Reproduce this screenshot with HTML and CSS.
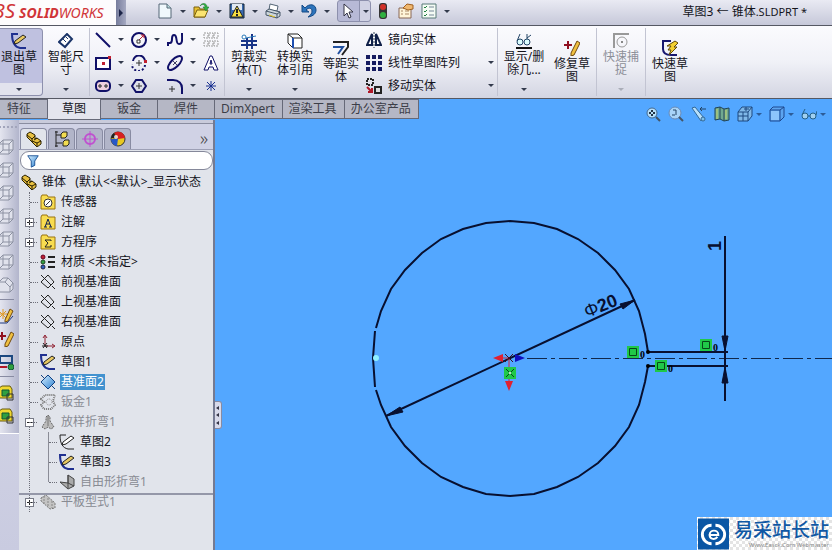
FILE: index.html
```html
<!DOCTYPE html>
<html lang="zh-CN">
<head>
    <meta charset="utf-8">
    <title>草图3 - 锥体.SLDPRT</title>
    <link rel="stylesheet" href="styles.css">
</head>
<body>
<svg class="sprite" aria-hidden="true">
    <defs>
        <linearGradient id="steel" x1="0" y1="0" x2="1" y2="1">
            <stop offset="0" stop-color="#d8f0ff"/>
            <stop offset="1" stop-color="#2a7fd0"/>
        </linearGradient>
    </defs>
    <symbol id="i-part" viewBox="0 0 16 16">
        <path d="M1 3l3-2 5 3v4l2-1 4 3v3l-4 3L1 6z" fill="#e8c040" stroke="#2a2000"/>
        <path d="M1 4l5 4 3-3M6 8v3M11 12l4-2M11 12v3M6 10l5 2 M8 9l3-2" fill="none" stroke="#2a2000"/>
    </symbol>
    <symbol id="i-config" viewBox="0 0 16 16">
        <path d="M2 0v16M2 4h6M2 12h6M1 1h3M1 15h3" fill="none" stroke="#222"/>
        <path d="M7 3l2-2h4v4l-2 2H7zM9 11l2-2h4v4l-2 2H9z" fill="#f2dc50" stroke="#222"/>
    </symbol>
    <symbol id="i-target" viewBox="0 0 16 16">
        <circle cx="8" cy="8" r="5" fill="none" stroke="#c050d0" stroke-width="2"/>
        <path d="M8 0v16M0 8h16" stroke="#c050d0"/>
    </symbol>
    <symbol id="i-ball" viewBox="0 0 16 16">
        <circle cx="8" cy="8" r="7" fill="#e8c820" stroke="#333"/>
        <path d="M8 8L4 2a7 7 0 0 1 11 5z" fill="#d82020"/>
        <path d="M8 8L4 2a7 7 0 0 0-3 5z" fill="#222"/>
        <path d="M8 8L1 8a7 7 0 0 0 6 7z" fill="#2858c8"/>
        <circle cx="6" cy="6" r="2" fill="#fff" opacity=".8"/>
    </symbol>
    <symbol id="i-funnel" viewBox="0 0 16 16">
        <path d="M2 2h12l-4 6v5l-4 2V8z" fill="url(#steel)" stroke="#124a90"/>
    </symbol>
    <symbol id="i-folder" viewBox="0 0 16 16">
        <path d="M1 3l1-2h5l1 2h7v12H1z" fill="#f8dc50" stroke="#9a7410"/>
    </symbol>
    <symbol id="i-sensor" viewBox="0 0 16 16">
        <use href="#i-folder"/>
        <circle cx="8" cy="9" r="4" fill="#fff" stroke="#333"/>
        <path d="M6 11l4-4" stroke="#333"/>
    </symbol>
    <symbol id="i-note" viewBox="0 0 16 16">
        <use href="#i-folder"/>
        <path d="M5 13l3-8 3 8M6 10h4M4 13h3M9 13h3" fill="none" stroke="#102050"/>
    </symbol>
    <symbol id="i-sigma" viewBox="0 0 16 16">
        <use href="#i-folder"/>
        <path d="M11 7V6H5l3 3-3 4h6v-2" fill="none" stroke="#222"/>
    </symbol>
    <symbol id="i-material" viewBox="0 0 16 16">
        <path d="M8 3h7M8 8h7M8 13h7" stroke="#222" stroke-width="2"/>
        <circle cx="3" cy="3" r="2" fill="#c02030" stroke="#602"/>
        <circle cx="3" cy="8" r="2" fill="#30a040" stroke="#242"/>
        <circle cx="3" cy="13" r="2" fill="#3060c0" stroke="#224"/>
    </symbol>
    <symbol id="i-plane" viewBox="0 0 16 16">
        <path d="M8 1l6 7-6 6-7-6zM1 1l3 3M5 5l6 6M12 12l3 3" fill="none" stroke="#222"/>
    </symbol>
    <symbol id="i-plane-on" viewBox="0 0 16 16">
        <path d="M8 1l7 7-7 7-7-7z" fill="url(#steel)" stroke="#104080"/>
        <path d="M1 1l3 3M12 12l3 3" stroke="#104080"/>
    </symbol>
    <symbol id="i-origin" viewBox="0 0 16 16">
        <path d="M5 12V2M5 12h9M3 4l2-3 2 3M12 10l3 2-3 2" fill="none" stroke="#902030"/>
        <path d="M2 12h6M3 9l4 5M7 9l-4 5" stroke="#222"/>
    </symbol>
    <symbol id="i-sketch" viewBox="0 0 16 16">
        <path d="M7 1H1c0 9 3 13 8 14h6" fill="none" stroke="#203090" stroke-width="2"/>
        <path d="M4 8l8-6 3 2-8 6-4 1z" fill="#e8c860" stroke="#222"/>
    </symbol>
    <symbol id="i-sketch-plain" viewBox="0 0 16 16">
        <path d="M7 1H1c0 9 3 13 8 14h6" fill="none" stroke="#222"/>
        <path d="M4 8l8-6 3 2-8 6-4 1z" fill="#fff" stroke="#222"/>
    </symbol>
    <symbol id="i-sheet" viewBox="0 0 16 16">
        <path d="M1 5l4-4h10l-2 6 2 4-4 4H4l-3-4 3-3z" fill="none" stroke="#777" stroke-dasharray="1 1" stroke-width="2"/>
        <circle cx="9" cy="8" r="3" fill="none" stroke="#888" stroke-dasharray="1 1"/>
    </symbol>
    <symbol id="i-loft" viewBox="0 0 16 16">
        <path d="M6 3l2-2 2 2v4l4 6-3 2-3-2-3 2-3-2 4-6z" fill="#bbb" stroke="#666" stroke-dasharray="2 1"/>
        <path d="M8 2v10" stroke="#777"/>
    </symbol>
    <symbol id="i-bend" viewBox="0 0 16 16">
        <path d="M1 8l8 1V1l6 4v7l-6 3z" fill="#aaa" stroke="#444"/>
        <path d="M9 1v8l6 3M9 9v5" fill="none" stroke="#444"/>
    </symbol>
    <symbol id="i-flat" viewBox="0 0 16 16">
        <path d="M1 4l5-3 9 8v5l-5 1-9-8z" fill="#c4c4c4" stroke="#777" stroke-dasharray="2 1"/>
        <path d="M4 2v8M8 4v9M12 7v7" stroke="#888" stroke-dasharray="2 1"/>
    </symbol>
    <symbol id="i-new" viewBox="0 0 16 16">
        <path d="M2 1h8l4 4v10H2z" fill="#f0f8fc" stroke="#567"/>
        <path d="M10 1v4h4" fill="#bdd" stroke="#567"/>
    </symbol>
    <symbol id="i-open" viewBox="0 0 16 16">
        <path d="M1 4h5l1 2h5v8H1z" fill="#e8c030" stroke="#7a6010"/>
        <path d="M1 14l3-7h11l-3 7z" fill="#fbe470" stroke="#7a6010"/>
        <path d="M7 3c3-3 5-1 5 1h-2l3 4 3-4h-2c0-4-5-5-7-1z" fill="#30b040" stroke="#187028" stroke-width=".5"/>
    </symbol>
    <symbol id="i-save" viewBox="0 0 16 16">
        <path d="M1 1h14v14H1z" fill="#3a6ab0" stroke="#123"/>
        <path d="M3 1h10v6H3z" fill="#e0e8f0"/>
        <path d="M8 3l6 11H2z" fill="#f8e040" stroke="#222"/>
        <path d="M8 6v4M8 11v2" stroke="#222" stroke-width="2"/>
    </symbol>
    <symbol id="i-print" viewBox="0 0 16 16">
        <path d="M4 7l1-6 8 2-1 5z" fill="#fff" stroke="#567"/>
        <path d="M1 8l3-2 11 3v4l-3 2-11-3z" fill="#ccd6dc" stroke="#456"/>
        <path d="M1 8l11 3 3-2M12 11v4" fill="none" stroke="#456"/>
        <path d="M4 12l6 2" stroke="#e0c020"/>
    </symbol>
    <symbol id="i-undo" viewBox="0 0 16 16">
        <path d="M1 2v7h7L5 7c3-3 6-2 6 1 0 2-1 4-4 6 6-1 8-4 8-7 0-6-7-7-11-2z" fill="#2d74bc" stroke="#154a86"/>
    </symbol>
    <symbol id="i-cursor" viewBox="0 0 16 16">
        <path d="M4 1v12l3-3 2 5 2-1-2-5h4z" fill="#fff" stroke="#334"/>
    </symbol>
    <symbol id="i-traffic" viewBox="0 0 16 16">
        <rect x="4" y="0" width="8" height="16" rx="3" fill="#343434"/>
        <circle cx="8" cy="4" r="3" fill="#d03028"/>
        <circle cx="8" cy="12" r="3" fill="#30b040"/>
    </symbol>
    <symbol id="i-props" viewBox="0 0 16 16">
        <path d="M1 5h12v10H1z" fill="#fff4d8" stroke="#865"/>
        <path d="M3 8h2M7 8h4M3 11h2M7 11h4" stroke="#a86"/>
        <path d="M5 5l4-4 6 1v4l-5 1z" fill="#f0b870" stroke="#a06020"/>
    </symbol>
    <symbol id="i-options" viewBox="0 0 16 16">
        <path d="M1 1h14v14H1z" fill="#f4fbf4" stroke="#587a78"/>
        <path d="M3 4l1 1 2-2M3 8l1 1 2-2M3 12l1 1 2-2" fill="none" stroke="#208040"/>
        <path d="M8 4h5M8 8h5M8 12h5" stroke="#789"/>
    </symbol>
    <symbol id="i-dimension" viewBox="0 0 16 16">
        <path d="M1 9l8-8 5 5-7 8z" fill="#fff" stroke="#1a3468" stroke-width="2"/>
        <path d="M5 6l3 3M8 4l2 2" stroke="#1a3468"/>
    </symbol>
    <symbol id="i-line" viewBox="0 0 16 16"><path d="M1 1l14 14" stroke="#101068" stroke-width="2"/></symbol>
    <symbol id="i-circle" viewBox="0 0 16 16">
        <circle cx="8" cy="8" r="7" fill="none" stroke="#101068" stroke-width="2"/>
        <path d="M7 9l6-6M10 3h3v3" fill="none" stroke="#c02030"/><path d="M6 8h3v3H6z" fill="#fff" stroke="#333"/>
    </symbol>
    <symbol id="i-spline" viewBox="0 0 16 16"><path d="M1 14v-3h2c4 0 0-8 4-8s1 9 5 9 3-5 3-11" fill="none" stroke="#101068" stroke-width="2"/></symbol>
    <symbol id="i-dots" viewBox="0 0 16 16"><path d="M1 1h4v5H1zM6 1h4v5H6zM11 1h4v5h-4zM1 9h4v5H1zM6 9h4v5H6zM11 9h4v5h-4z" fill="none" stroke="#999" stroke-dasharray="2 1"/></symbol>
    <symbol id="i-rect" viewBox="0 0 16 16"><path d="M1 3h14v11H1z" fill="#fff" stroke="#101068" stroke-width="2"/><path d="M7 7h3v3H7zM13 1h3v3h-3z" fill="#c02030"/></symbol>
    <symbol id="i-arc" viewBox="0 0 16 16">
        <path d="M2 6a6 6 0 0 1 12 1" fill="none" stroke="#101068" stroke-width="2"/>
        <path d="M14 10a6 6 0 0 1-13-1" fill="none" stroke="#101068" stroke-width="2" stroke-dasharray="2 2"/>
        <path d="M8 5v6M5 8h6" stroke="#333"/><path d="M13 5h3v3h-3z" fill="#c02030"/>
    </symbol>
    <symbol id="i-ellipse" viewBox="0 0 16 16">
        <ellipse cx="8" cy="8" rx="9" ry="4" transform="rotate(-45 8 8)" fill="none" stroke="#101068" stroke-width="2"/>
        <path d="M6 6l4 4M10 6l-4 4" stroke="#446"/>
    </symbol>
    <symbol id="i-text" viewBox="0 0 16 16"><path d="M1 15L7 1h2l6 14h-4l-1-3H6l-1 3zM7 9h2L8 5z" fill="#fff" stroke="#101068"/></symbol>
    <symbol id="i-slot" viewBox="0 0 16 16"><rect x="1" y="3" width="14" height="10" rx="4" fill="#f0d0e0" stroke="#101068" stroke-width="2"/><path d="M4 7h2v2H4zM10 7h2v2h-2z" fill="#fff" stroke="#222"/></symbol>
    <symbol id="i-hex" viewBox="0 0 16 16"><path d="M5 2h6l4 6-4 6H5L1 8z" fill="none" stroke="#101068" stroke-width="2"/><path d="M8 5v6M5 8h6" stroke="#333"/></symbol>
    <symbol id="i-fillet" viewBox="0 0 16 16"><path d="M0 2h6c6 0 9 4 9 8v6" fill="none" stroke="#101068" stroke-width="2"/><path d="M5 8v6M2 11h6" stroke="#333"/></symbol>
    <symbol id="i-star" viewBox="0 0 16 16"><path d="M8 3v10M3 8h10M4 4l8 8M12 4l-8 8" stroke="#183090"/></symbol>
    <symbol id="i-trim" viewBox="0 0 16 16">
        <path d="M0 8h16M6 5v11M11 1v15M0 12h16" stroke="#183488" stroke-width="2"/>
        <circle cx="3" cy="4" r="2" fill="#fff" stroke="#2878b8"/><path d="M5 5l10-2" stroke="#2878b8"/>
    </symbol>
    <symbol id="i-convert" viewBox="0 0 16 16">
        <path d="M1 1h10l4 4v10H6L1 10zM1 1l5 4h9M6 5v10" fill="#fff" stroke="#222"/>
        <path d="M6 5v10" stroke="#2050b0" stroke-width="2"/>
    </symbol>
    <symbol id="i-offset" viewBox="0 0 16 16">
        <path d="M0 2h15v5l-6 8" fill="none" stroke="#222" stroke-width="2"/>
        <path d="M0 7h10l-5 7" fill="none" stroke="#2050a0" stroke-width="2"/>
    </symbol>
    <symbol id="i-mirror" viewBox="0 0 16 16">
        <path d="M6 2v11H1zM10 2v11h5z" fill="#fff" stroke="#102048" stroke-width="2"/><path d="M8 0v16" stroke="#345" stroke-dasharray="2 1"/>
    </symbol>
    <symbol id="i-pattern" viewBox="0 0 16 16"><path d="M0 0h4v4H0zM6 0h4v4H6zM12 0h4v4h-4zM0 6h4v4H0zM6 6h4v4H6zM12 6h4v4h-4zM0 12h4v4H0zM6 12h4v4H6zM12 12h4v4h-4z" fill="#151b60"/></symbol>
    <symbol id="i-move" viewBox="0 0 16 16">
        <path d="M1 1h6v6H1z" fill="none" stroke="#222" stroke-width="2" stroke-dasharray="2 1"/>
        <path d="M9 9h6v6H9z" fill="#ddd" stroke="#222" stroke-width="2"/>
        <path d="M1 9l5 5M6 10v4H2" fill="none" stroke="#b01828" stroke-width="2"/>
    </symbol>
    <symbol id="i-relations" viewBox="0 0 16 16">
        <path d="M0 15h16" stroke="#111" stroke-width="2"/>
        <path d="M4 1L1 8M11 1v9M11 5l4-3" fill="none" stroke="#246"/>
        <circle cx="4" cy="9" r="3" fill="#dff" stroke="#246"/><circle cx="11" cy="9" r="3" fill="#dff" stroke="#246"/>
    </symbol>
    <symbol id="i-repair" viewBox="0 0 16 16">
        <path d="M0 5h8M4 1v8" stroke="#901020" stroke-width="2"/>
        <path d="M7 13L13 1l3 2-6 12-3 1z" fill="#f0c040" stroke="#704a10"/>
    </symbol>
    <symbol id="i-snap" viewBox="0 0 16 16"><path d="M0 1h16M1 1v14" stroke="#999" stroke-width="2"/><circle cx="9" cy="9" r="5" fill="none" stroke="#999"/><path d="M8 8h2v2H8z" fill="#888"/></symbol>
    <symbol id="i-rapid" viewBox="0 0 16 16">
        <path d="M9 1H1v8c0 4 3 6 8 6h6" fill="none" stroke="#181870" stroke-width="2"/>
        <path d="M5 6l8-5 3 2-4 4h3l-8 8 2-5H6l3-4z" fill="#f4d030" stroke="#604808"/>
    </symbol>
    <symbol id="i-zoomfit" viewBox="0 0 16 16"><circle cx="7" cy="7" r="5" fill="#b8e0fa" stroke="#446a90"/><path d="M11 11l4 4" stroke="#456" stroke-width="2"/><path d="M7 4v6M4 7h6" stroke="#234" stroke-width="2" stroke-dasharray="2 2"/></symbol>
    <symbol id="i-zoomarea" viewBox="0 0 16 16"><circle cx="7" cy="7" r="6" fill="#a8d4f8" stroke="#6a8cb8"/><path d="M11 11l4 4" stroke="#456" stroke-width="2"/><path d="M5 4h3v5M4 9h3" fill="none" stroke="#246"/></symbol>
    <symbol id="i-prev" viewBox="0 0 16 16"><path d="M1 2l3-1 9 11-3 3z" fill="#b8e0fa" stroke="#346a98"/><path d="M15 3H9M11 1L9 3l2 2" fill="none" stroke="#246"/><circle cx="12" cy="13" r="2" fill="#80c0e8" stroke="#346a98"/></symbol>
    <symbol id="i-section" viewBox="0 0 16 16"><path d="M1 2l5-1 4 2 5-1v12l-5 1-4-2-5 1z" fill="#70a890" stroke="#245"/><path d="M6 1v12M10 3v12" stroke="#245"/><path d="M3 3v10M12 4v9" stroke="#c8d870"/></symbol>
    <symbol id="i-orient" viewBox="0 0 16 16"><path d="M1 6l4-5h10v9l-4 5H1z" fill="#80b8e8" stroke="#1c4880"/><path d="M1 6h10v9M11 6l4-5M6 6v9M1 10h10M7 3h5M9 1v4" fill="none" stroke="#1c4880"/></symbol>
    <symbol id="i-display" viewBox="0 0 16 16"><path d="M1 4l3-3h11v10l-4 4H1z" fill="#5ca4f0" stroke="#1c4890"/><path d="M2 5h8v9H2z" fill="#8cc4fc"/><path d="M1 4h10v11M11 4l4-3" fill="none" stroke="#1c4890"/></symbol>
    <symbol id="i-glasses" viewBox="0 0 16 16"><circle cx="4" cy="10" r="3" fill="#a0d0f0" stroke="#246088"/><circle cx="12" cy="10" r="3" fill="#a0d0f0" stroke="#246088"/><path d="M1 9l3-6M7 10h2M15 9l1-4" fill="none" stroke="#246088"/></symbol>
    <symbol id="i-cube" viewBox="0 0 16 16"><path d="M5 1h10v10l-4 4H1V5z" fill="#e0e2ec" stroke="#8c91a2"/><path d="M1 5h10v10M11 5l4-4M5 1v10h10M5 11l-4 4" fill="none" stroke="#8c91a2"/></symbol>
    <symbol id="i-cube-cut" viewBox="0 0 16 16"><path d="M1 5l4-4h5l5 5v6l-3 3H1z" fill="#e0e2ec" stroke="#8c91a2"/><path d="M1 5h6l5 5v5M7 5l3-4M12 10l3-4" fill="none" stroke="#8c91a2"/></symbol>
    <symbol id="i-add-sketch" viewBox="0 0 16 16"><path d="M1 3l7 7M8 3l-7 7M5 1v10M0 6h10" stroke="#e09820"/><path d="M1 15h8l6-7" fill="none" stroke="#1c3880"/><path d="M7 12l5-11 3 2-5 10-3 1z" fill="#f0c040" stroke="#704a10"/></symbol>
    <symbol id="i-link" viewBox="0 0 16 16"><path d="M2 2h12v7H2z" fill="none" stroke="#1c4880" stroke-width="2"/><path d="M1 13h8" stroke="#b01828" stroke-width="2"/><circle cx="13" cy="13" r="3" fill="#30a040" stroke="#153"/></symbol>
    <symbol id="i-body" viewBox="0 0 16 16"><path d="M1 3l3-2h8l2 3v9H1z" fill="#f0d830" stroke="#665a10"/><path d="M4 5h7v6H4z" fill="#30a040" stroke="#153"/><path d="M9 9h6v6H9z" fill="none" stroke="#333"/></symbol>
</svg>

<header class="titlebar">
    <div class="brand"><span class="brand-mark">3S</span><b>SOLID</b>WORKS</div>
    <button class="brand-more" aria-label="菜单"></button>
    <div class="quick">
        <button class="quick-item" aria-label="新建"><svg class="icon"><use href="#i-new"/></svg><i class="caret"></i></button>
        <button class="quick-item" aria-label="打开"><svg class="icon"><use href="#i-open"/></svg><i class="caret"></i></button>
        <button class="quick-item" aria-label="保存"><svg class="icon"><use href="#i-save"/></svg><i class="caret"></i></button>
        <button class="quick-item" aria-label="打印"><svg class="icon"><use href="#i-print"/></svg><i class="caret"></i></button>
        <button class="quick-item" aria-label="撤消"><svg class="icon"><use href="#i-undo"/></svg><i class="caret"></i></button>
        <button class="quick-item pressed" aria-label="选择"><svg class="icon"><use href="#i-cursor"/></svg><i class="caret"></i></button>
        <button class="quick-item single" aria-label="重建模型"><svg class="icon"><use href="#i-traffic"/></svg></button>
        <button class="quick-item single" aria-label="文件属性"><svg class="icon"><use href="#i-props"/></svg></button>
        <button class="quick-item" aria-label="选项"><svg class="icon"><use href="#i-options"/></svg><i class="caret"></i></button>
    </div>
    <h1 class="doc-title">草图3 ← 锥体<span class="ext">.SLDPRT *</span></h1>
</header>

<div class="ribbon">
    <button class="big pressed first"><svg class="icon"><use href="#i-sketch"/></svg><span>退出草图</span><i class="caret"></i></button>
    <button class="big"><svg class="icon"><use href="#i-dimension"/></svg><span>智能尺寸</span><i class="caret"></i></button>
    <div class="tools">
        <button aria-label="直线"><svg class="icon"><use href="#i-line"/></svg><i class="caret"></i></button>
        <button aria-label="圆"><svg class="icon"><use href="#i-circle"/></svg><i class="caret"></i></button>
        <button aria-label="样条曲线"><svg class="icon"><use href="#i-spline"/></svg><i class="caret"></i></button>
        <button aria-label="基准面"><svg class="icon"><use href="#i-dots"/></svg></button>
        <button aria-label="矩形"><svg class="icon"><use href="#i-rect"/></svg><i class="caret"></i></button>
        <button aria-label="圆弧"><svg class="icon"><use href="#i-arc"/></svg><i class="caret"></i></button>
        <button aria-label="椭圆"><svg class="icon"><use href="#i-ellipse"/></svg><i class="caret"></i></button>
        <button aria-label="文字"><svg class="icon"><use href="#i-text"/></svg></button>
        <button aria-label="槽口"><svg class="icon"><use href="#i-slot"/></svg><i class="caret"></i></button>
        <button aria-label="多边形"><svg class="icon"><use href="#i-hex"/></svg></button>
        <button aria-label="圆角"><svg class="icon"><use href="#i-fillet"/></svg><i class="caret"></i></button>
        <button aria-label="点"><svg class="icon"><use href="#i-star"/></svg></button>
    </div>
    <div class="group">
        <button class="big"><svg class="icon"><use href="#i-trim"/></svg><span>剪裁实体(T)</span><i class="caret"></i></button>
        <button class="big"><svg class="icon"><use href="#i-convert"/></svg><span>转换实体引用</span><i class="caret"></i></button>
        <button class="big low"><svg class="icon"><use href="#i-offset"/></svg><span>等距实体</span></button>
        <div class="list">
            <button><svg class="icon"><use href="#i-mirror"/></svg><span>镜向实体</span></button>
            <button><svg class="icon"><use href="#i-pattern"/></svg><span>线性草图阵列</span><i class="caret"></i></button>
            <button><svg class="icon"><use href="#i-move"/></svg><span>移动实体</span><i class="caret"></i></button>
        </div>
    </div>
    <div class="group">
        <button class="big wide"><svg class="icon"><use href="#i-relations"/></svg><span>显示/删除几...</span><i class="caret"></i></button>
        <button class="big low"><svg class="icon"><use href="#i-repair"/></svg><span>修复草图</span></button>
    </div>
    <div class="group">
        <button class="big" disabled><svg class="icon"><use href="#i-snap"/></svg><span>快速捕捉</span><i class="caret"></i></button>
    </div>
    <div class="group">
        <button class="big low"><svg class="icon"><use href="#i-rapid"/></svg><span>快速草图</span></button>
    </div>
</div>

<main class="workspace">
    <nav class="tabs">
        <button>特征</button>
        <button class="active">草图</button>
        <button>钣金</button>
        <button>焊件</button>
        <button>DimXpert</button>
        <button>渲染工具</button>
        <button>办公室产品</button>
    </nav>

    <div class="view-tools">
        <button aria-label="整屏显示全图"><svg class="icon"><use href="#i-zoomfit"/></svg></button>
        <button aria-label="局部放大"><svg class="icon"><use href="#i-zoomarea"/></svg></button>
        <button aria-label="上一视图"><svg class="icon"><use href="#i-prev"/></svg></button>
        <button aria-label="剖面视图"><svg class="icon"><use href="#i-section"/></svg></button>
        <button aria-label="视图定向"><svg class="icon"><use href="#i-orient"/></svg><i class="caret"></i></button>
        <button aria-label="显示样式"><svg class="icon"><use href="#i-display"/></svg><i class="caret"></i></button>
        <button aria-label="隐藏/显示"><svg class="icon"><use href="#i-glasses"/></svg><i class="caret"></i></button>
    </div>

    <div class="columns">
        <div class="side-tools">
            <div class="side-inner">
                <button aria-label="前视"><svg class="icon"><use href="#i-cube"/></svg></button>
                <button aria-label="后视"><svg class="icon"><use href="#i-cube"/></svg></button>
                <button aria-label="左视"><svg class="icon"><use href="#i-cube"/></svg></button>
                <button aria-label="右视"><svg class="icon"><use href="#i-cube"/></svg></button>
                <button aria-label="上视"><svg class="icon"><use href="#i-cube"/></svg></button>
                <button aria-label="下视"><svg class="icon"><use href="#i-cube"/></svg></button>
                <button aria-label="等轴测"><svg class="icon"><use href="#i-cube-cut"/></svg></button>
                <hr>
                <button aria-label="草图"><svg class="icon"><use href="#i-add-sketch"/></svg></button>
                <button aria-label="修复"><svg class="icon"><use href="#i-repair"/></svg></button>
                <button aria-label="链接"><svg class="icon"><use href="#i-link"/></svg></button>
                <hr>
                <button aria-label="实体"><svg class="icon"><use href="#i-body"/></svg></button>
                <button aria-label="曲面"><svg class="icon"><use href="#i-body"/></svg></button>
            </div>
        </div>

        <aside class="panel">
            <div class="panel-tabs">
                <button class="active" aria-label="设计树"><svg class="icon"><use href="#i-part"/></svg></button>
                <button aria-label="配置"><svg class="icon"><use href="#i-config"/></svg></button>
                <button aria-label="尺寸专家"><svg class="icon"><use href="#i-target"/></svg></button>
                <button aria-label="外观"><svg class="icon"><use href="#i-ball"/></svg></button>
                <button class="more">»</button>
            </div>
            <label class="filter">
                <svg class="icon"><use href="#i-funnel"/></svg>
                <input type="text" aria-label="过滤器">
            </label>
            <div class="tree">
                <div class="node root"><svg class="icon"><use href="#i-part"/></svg><span>锥体&nbsp;&nbsp; (默认&lt;&lt;默认&gt;_显示状态</span></div>
                <ul>
                    <li><div class="node"><svg class="icon"><use href="#i-sensor"/></svg><span>传感器</span></div></li>
                    <li><div class="node"><button class="expander plus" aria-label="展开"></button><svg class="icon"><use href="#i-note"/></svg><span>注解</span></div></li>
                    <li><div class="node"><button class="expander plus" aria-label="展开"></button><svg class="icon"><use href="#i-sigma"/></svg><span>方程序</span></div></li>
                    <li><div class="node"><svg class="icon"><use href="#i-material"/></svg><span>材质 &lt;未指定&gt;</span></div></li>
                    <li><div class="node"><svg class="icon"><use href="#i-plane"/></svg><span>前视基准面</span></div></li>
                    <li><div class="node"><svg class="icon"><use href="#i-plane"/></svg><span>上视基准面</span></div></li>
                    <li><div class="node"><svg class="icon"><use href="#i-plane"/></svg><span>右视基准面</span></div></li>
                    <li><div class="node"><svg class="icon"><use href="#i-origin"/></svg><span>原点</span></div></li>
                    <li><div class="node"><svg class="icon"><use href="#i-sketch"/></svg><span>草图1</span></div></li>
                    <li><div class="node selected"><svg class="icon"><use href="#i-plane-on"/></svg><span>基准面2</span></div></li>
                    <li><div class="node dim"><svg class="icon"><use href="#i-sheet"/></svg><span>钣金1</span></div></li>
                    <li>
                        <div class="node dim"><button class="expander" aria-label="折叠"></button><svg class="icon"><use href="#i-loft"/></svg><span>放样折弯1</span></div>
                        <ul>
                            <li><div class="node"><svg class="icon"><use href="#i-sketch-plain"/></svg><span>草图2</span></div></li>
                            <li><div class="node"><svg class="icon"><use href="#i-sketch"/></svg><span>草图3</span></div></li>
                            <li><div class="node dim"><svg class="icon"><use href="#i-bend"/></svg><span>自由形折弯1</span></div></li>
                        </ul>
                    </li>
                    <li class="rolled-back"><div class="node dim"><button class="expander plus" aria-label="展开"></button><svg class="icon"><use href="#i-flat"/></svg><span>平板型式1</span></div></li>
                </ul>
            </div>
        </aside>

        <section class="viewport">
            <button class="splitter" aria-label="折叠面板"><i></i><i></i><i></i></button>
            <svg class="drawing" viewBox="215 120 617 430" preserveAspectRatio="xMinYMin meet">
                <!-- centre line -->
                <path class="axis" d="M527 358.5H832"/>
                <!-- open circle, drawn in chords -->
                <path class="line" d="M648 352L645 334 639 311 629 289 615 270 598 253 578 239 557 229 534 223 510 221 486 223 463 229 441 239 422 253 405 270 391 289 381 311 376 328"/>
                <path class="line" d="M375 331L373 358 375 387"/>
                <path class="line" d="M376 390L381 405 391 427 405 446 422 463 441 477 463 487 486 494 510 496 534 494 557 487 578 477 598 463 615 446 629 427 639 405 645 382 648 366"/>
                <circle cx="376" cy="358" r="3" fill="#8ff0ff"/>
                <!-- diameter dimension -->
                <path class="line" d="M386 416L635 300"/>
                <path class="arrow" d="M386 416l14-9 3 5zM635 300l-15 4 3 5z"/>
                <text class="dim-text" transform="translate(587 318) rotate(-22)">Φ<tspan class="bold">20</tspan></text>
                <!-- gap dimension -->
                <path class="line" d="M648 352H728M648 366H728M725 236V401"/>
                <path class="arrow" d="M725 351l-3-15h6zM725 367l-3 16h6z"/>
                <circle cx="648" cy="352" r="2"/>
                <circle cx="648" cy="366" r="2"/>
                <text class="dim-text bold" transform="translate(721 251) rotate(-90)">1</text>
                <!-- origin -->
                <path d="M509 358h-8M509 358v26" stroke="#d02838"/>
                <path d="M493 358l10-4v8zM509 391l-4-10h8z" fill="#e02030"/>
                <path d="M525 358l-10-4v8z" fill="#1010c0"/>
                <path d="M505 354l8 8M513 354l-8 8" stroke="#401020"/>
                <!-- relations -->
                <path class="relation" d="M504 367h12v12h-12zM627 346h12v12h-12zM655 360h12v12h-12zM700 339h12v12h-12z"/>
                <path class="relation-mark" d="M506 369l8 8M514 369l-8 8M629.5 348.5h7v7h-7zM657.500 362.500h7v7h-7zM702.500 341.500h7v7h-7z"/>
                <circle cx="510" cy="373" r="1" fill="#fff"/>
                <text class="relation-id" x="640" y="358">0</text>
                <text class="relation-id" x="668" y="372">0</text>
                <text class="relation-id" x="713" y="351">0</text>
            </svg>
            <div class="watermark">
                <svg class="watermark-logo" viewBox="0 0 32 32">
                    <path d="M0 0h32v32H0z" fill="#0a56a4"/>
                    <path d="M14 7a9 9 0 0 0 0 19M18 7a9 9 0 0 1 0 19" fill="none" stroke="#fff" stroke-width="3"/>
                    <path d="M11 17h10c0-6-9-6-9 0 0 5 6 5 8 2" fill="none" stroke="#fff" stroke-width="2"/>
                </svg>
                <div class="watermark-text"><b>易采站长站</b><small>Www.Easck.Com Webmaster</small></div>
            </div>
        </section>
    </div>
</main>
</body>
</html>
```
FILE: styles.css
```css
* {
    box-sizing: border-box;
}

body {
    margin: 0;
    height: 100vh;
    display: flex;
    flex-direction: column;
    overflow: hidden;
    background: #53a7ff;
    color: #14141c;
    font: 12px/13px "Noto Sans", "Noto Sans CJK SC", sans-serif;
}

button {
    margin: 0;
    padding: 0;
    border: 0;
    background: none;
    color: inherit;
    font: inherit;
}

.sprite {
    position: absolute;
    width: 0;
    height: 0;
}

.icon {
    flex: none;
    width: 16px;
    height: 16px;
}

.caret {
    flex: none;
    width: 6px;
    height: 3px;
    border: 3px solid transparent;
    border-top-color: #333a4c;
    border-bottom: 0;
}

/* title bar */
.titlebar {
    flex: none;
    display: flex;
    align-items: stretch;
    height: 26px;
    border-bottom: 1px solid #555863;
    background: linear-gradient(#e9eaf3, #c6c8d9);
}

.brand {
    width: 116px;
    overflow: hidden;
    background: #fdfcfd;
    color: #d03438;
    font-size: 14px;
    font-style: italic;
    line-height: 26px;
    white-space: nowrap;
}

.brand-mark {
    display: inline-block;
    width: 25px;
    margin-left: -6px;
    font-size: 20px;
    line-height: 22px;
    vertical-align: top;
}

.brand-more {
    width: 10px;
    background: linear-gradient(90deg, #777d9c, #a5a9c2);
}

.brand-more::before {
    content: "";
    display: block;
    width: 0;
    margin-left: 3px;
    border: 4px solid transparent;
    border-left-color: #1c2448;
    border-right: 0;
}

.quick {
    display: flex;
    align-items: center;
    margin-left: 31px;
    padding-bottom: 3px;
}

.quick-item {
    display: flex;
    align-items: center;
    gap: 7px;
    width: 36px;
    height: 22px;
}

.quick-item.single {
    width: 23px;
}

.quick-item.pressed {
    width: 34px;
    margin-right: 4px;
    padding-left: 2px;
    border: 1px solid #8d90ad;
    border-radius: 3px;
    background: linear-gradient(90deg, #b7b9d6 21px, #8d90ad 21px, #8d90ad 22px, #d0d2e4 22px);
}

.doc-title {
    margin: 0 25px 0 auto;
    font-size: 12px;
    font-weight: normal;
    line-height: 24px;
}

.ext {
    font-size: 11px;
}

/* ribbon */
.ribbon {
    flex: none;
    display: flex;
    height: 73px;
    padding: 2px 0;
    border-bottom: 1px solid #555863;
    background: linear-gradient(#fbfbfe, #f0f1f7 50%, #d3d5e2);
}

.big {
    display: flex;
    flex-direction: column;
    align-items: center;
    width: 46px;
    padding-top: 5px;
}

.big span {
    width: 37px;
    height: 26px;
    margin-top: 1px;
    word-break: break-all;
}

.big .caret {
    margin-top: 12px;
}

.big.low {
    padding-top: 12px;
}

.big.wide {
    width: 50px;
}

.big.wide span {
    width: 42px;
}

.big.pressed {
    border: 1px solid #8d90ad;
    border-left: 0;
    border-radius: 0 4px 4px 0;
    background: linear-gradient(#bfc1e0 54px, #e2e3ee 54px);
    padding-top: 4px;
}

.big.first {
    width: 43px;
    padding-right: 4px;
}

.big:disabled {
    color: #8d8f98;
}

.big:disabled .caret {
    border-top-color: #aaadb8;
}

.tools {
    display: grid;
    grid-template-columns: 36px 36px 36px 21px;
    grid-auto-rows: 23px;
    padding-left: 5px;
    border-left: 1px solid #c2c4d2;
}

.tools button {
    display: flex;
    align-items: center;
    gap: 7px;
}

.group {
    display: flex;
    border-left: 1px solid #c2c4d2;
    padding: 0 1px;
}

.list {
    width: 132px;
    padding-left: 2px;
}

.list button {
    display: flex;
    align-items: center;
    width: 128px;
    height: 23px;
    gap: 6px;
}

.list .caret {
    margin-left: auto;
}

/* command tabs */
.workspace {
    position: relative;
    flex: 1;
    min-height: 0;
    display: flex;
    flex-direction: column;
}

.tabs {
    flex: none;
    display: flex;
    height: 21px;
}

.tabs button {
    padding: 0 7px 0 6px;
    height: 20px;
    border: 1px solid #666978;
    border-width: 1px 1px 1px 0;
    background: #b5b7c5;
    color: #3c3e48;
    line-height: 18px;
}

.tabs button:first-child {
    padding-left: 7px;
    padding-right: 16px;
}

.tabs button:nth-child(3),
.tabs button:nth-child(4) {
    padding: 0 16px;
}

.tabs .active {
    padding: 0 14px;
    height: 21px;
    border-top: 0;
    background: #e4e5ee;
    color: #14141c;
}

.view-tools {
    position: absolute;
    top: 7px;
    right: 6px;
    display: flex;
    gap: 7px;
}

.view-tools button {
    display: flex;
    align-items: center;
    gap: 3px;
}

.view-tools .caret {
    border-top-color: #2c5c98;
}

/* side toolbar */
.columns {
    flex: 1;
    min-height: 0;
    display: flex;
}

.side-tools {
    flex: none;
    width: 19px;
    background: linear-gradient(#dedfed, #c9cbe0);
}

.side-inner {
    display: flex;
    flex-direction: column;
    align-items: flex-end;
    height: 314px;
    padding: 15px 5px 0 0;
    overflow: hidden;
    border-bottom: 1px solid #fff;
    background: linear-gradient(90deg, #e4e5ef, #b2b5cc);
}

.side-inner::before {
    content: "";
    width: 18px;
    border-top: 2px dotted #a2a5bb;
    margin: -9px -3px 7px 0;
}

.side-inner button {
    display: flex;
    align-items: center;
    height: 23px;
}

.side-inner hr {
    width: 16px;
    margin: 3px 0 4px;
    border: 0;
    border-top: 1px solid #888ba2;
}

/* feature tree panel */
.panel {
    flex: none;
    width: 196px;
    overflow: hidden;
    border-right: 2px solid #747a92;
    background: #e1e4eb;
}

.panel-tabs {
    display: flex;
    align-items: flex-end;
    height: 30px;
    padding-left: 1px;
    border-bottom: 1px solid #9c9fb5;
    background: linear-gradient(#c9cbdb 3px, #8a8da0 3px, #8a8da0 4px, #d0d2e5 4px);
}

.panel-tabs button {
    display: flex;
    align-items: center;
    justify-content: center;
    width: 27px;
    height: 21px;
    margin-right: 1px;
    border: 1px solid #888ba2;
    border-bottom: 0;
    border-radius: 4px 4px 0 0;
    background: #b2b5c9;
}

.panel-tabs .active {
    background: #e1e4eb;
}

.panel-tabs .more {
    width: 18px;
    margin: 0 0 0 auto;
    border: 0;
    background: none;
    color: #444;
    font-size: 18px;
    font-weight: 300;
}

.filter {
    display: flex;
    align-items: center;
    height: 19px;
    margin: 1px 0 2px 1px;
    padding-left: 5px;
    border: 1px solid #85889a;
    border-radius: 9px;
    background: #fff;
}

.filter .icon {
    width: 14px;
}

.filter input {
    flex: 1;
    min-width: 0;
    border: 0;
    outline: 0;
    background: none;
    font: inherit;
}

.tree ul {
    margin: 0;
    padding: 0;
    list-style: none;
}

.tree > ul {
    margin-left: 10px;
    border-left: 1px dotted #6c6e78;
}

.tree li ul {
    margin-left: 18px;
    background: linear-gradient(#8a8c96, #8a8c96) 0 0 / 1px 50px no-repeat;
    padding-left: 1px;
}

.node {
    display: flex;
    align-items: center;
    height: 20px;
    white-space: nowrap;
}

.node.root {
    padding-left: 2px;
}

.node span {
    margin-left: 4px;
    padding: 1px 1px 2px;
}

li .node::before {
    content: "";
    width: 8px;
    margin-right: 2px;
    border-top: 1px dotted #6c6e78;
}

.expander {
    order: -1;
    width: 9px;
    height: 9px;
    margin: 0 -5px 0 -5px;
    border: 1px solid #777a86;
    background: linear-gradient(#222, #222) 1px 3px / 5px 1px no-repeat, #fff;
}

.expander.plus {
    background: linear-gradient(#222, #222) 1px 3px / 5px 1px no-repeat, linear-gradient(#222, #222) 3px 1px / 1px 5px no-repeat, #fff;
}

.expander ~ .icon {
    margin-left: 1px;
}

.node.dim span {
    color: #888b93;
}

.node.selected span {
    background: #4292cf;
    color: #fff;
}

.rolled-back {
    position: relative;
}

/* rollback bar */
.rolled-back::before {
    content: "";
    position: absolute;
    top: 1px;
    left: -11px;
    right: 0;
    border-top: 2px solid #9497a8;
}

/* model view */
.viewport {
    position: relative;
    flex: 1;
    min-width: 0;
    overflow: hidden;
}

.drawing {
    display: block;
    width: 100%;
}

.splitter {
    position: absolute;
    top: 281px;
    left: -2px;
    display: flex;
    flex-direction: column;
    align-items: center;
    justify-content: space-evenly;
    width: 9px;
    height: 28px;
    border: 1px solid #888ba2;
    border-left: 0;
    border-radius: 0 3px 3px 0;
    background: #d8daea;
}

.splitter i {
    border: 2px solid transparent;
    border-right: 3px solid #334;
    border-left: 0;
}

.line {
    fill: none;
    stroke: #081030;
    stroke-width: 2;
}

.axis {
    stroke: #10284c;
    stroke-width: 1;
    stroke-dasharray: 20 4 4 4;
}

.arrow {
    fill: #081030;
    stroke: #081030;
}

.dim-text {
    fill: #081030;
    font: 18px "Liberation Sans", sans-serif;
}

.bold {
    font-weight: bold;
}

.relation {
    fill: #20c848;
}

.relation-mark {
    fill: none;
    stroke: #064818;
}

.relation-id {
    font: bold 10px "Liberation Serif", serif;
}

.watermark {
    position: absolute;
    right: 0;
    bottom: 0;
    display: flex;
    width: 135px;
    height: 33px;
    padding: 1px 0 0 1px;
    background: repeating-conic-gradient(#e4e4e4 0 25%, #fff 0 50%) 0 0 / 6px 6px;
}

.watermark-logo {
    flex: none;
    width: 31px;
    height: 32px;
}

.watermark-text {
    flex: 1;
    padding-right: 3px;
    text-align: right;
    color: #1058a4;
    white-space: nowrap;
}

.watermark-text b {
    display: block;
    font-size: 19px;
    font-weight: 500;
    line-height: 24px;
}

.watermark-text small {
    display: block;
    color: #888;
    font-size: 6px;
    line-height: 7px;
}
```
